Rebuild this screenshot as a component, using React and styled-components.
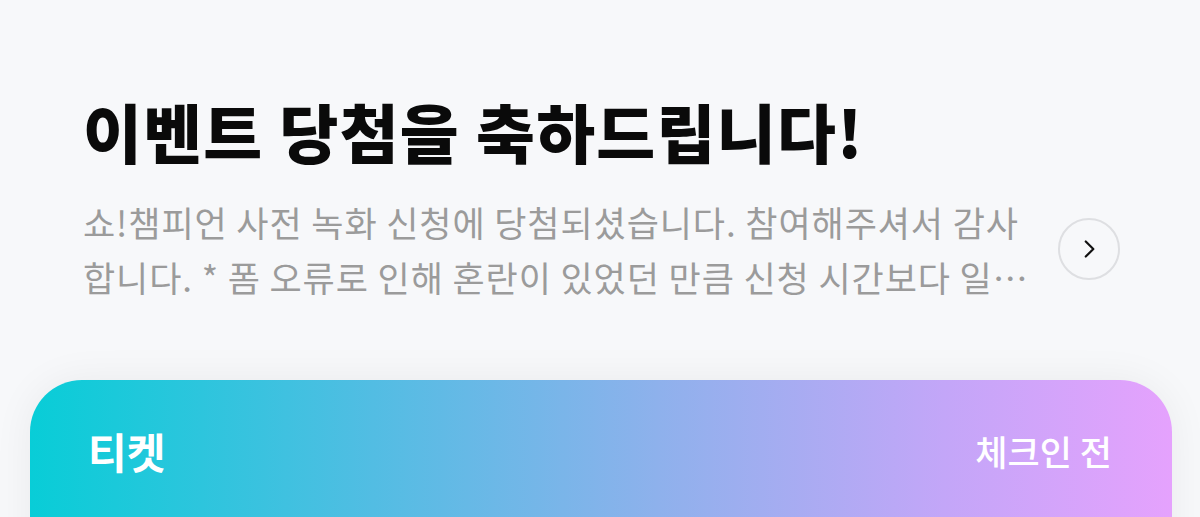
import React from 'react'
import styled, { createGlobalStyle } from 'styled-components'

const GlobalStyle = createGlobalStyle`
  html, body {
    margin: 0;
    padding: 0;
    background: #f7f8fa;
    font-family: "Noto Sans CJK KR", "Noto Sans", sans-serif;
  }
  body {
    overflow: hidden;
  }
`

const Page = styled.div`
  width: 1200px;
  height: 517px;
  overflow: hidden;
  background: #f7f8fa;
`

const Header = styled.section`
  padding: 84px 80px 0 83px;
`

const Title = styled.h1`
  margin: 0;
  font-size: 64px;
  font-weight: 800;
  letter-spacing: 1.3px;
  line-height: 92px;
  color: #0a0a0a;
`

const DescRow = styled.div`
  display: flex;
  align-items: center;
  gap: 24px;
  margin-top: 18px;
`

const Desc = styled.p`
  margin: 0;
  flex: 1;
  font-size: 35px;
  line-height: 55px;
  letter-spacing: 0.9px;
  color: #9b9b9b;
  display: -webkit-box;
  -webkit-line-clamp: 2;
  -webkit-box-orient: vertical;
  overflow: hidden;
`

const MoreButton = styled.button`
  flex: none;
  width: 62px;
  height: 62px;
  border-radius: 50%;
  border: 2px solid #dedfe2;
  background: #f7f8fa;
  display: flex;
  align-items: center;
  justify-content: center;
  padding: 0;
  cursor: pointer;
  svg {
    width: 26px;
    height: 26px;
  }
`

const Card = styled.div`
  margin: 76px 28px 0 30px;
  height: 300px;
  border-radius: 52px 52px 0 0;
  background: linear-gradient(90deg, #08cdd7 0%, #52bde3 30%, #8eb1ec 55%, #c3a6f8 80%, #e5a2fd 100%);
  box-shadow: 0 0 40px rgba(0, 0, 0, 0.06);
`

const CardHead = styled.div`
  display: flex;
  align-items: center;
  justify-content: space-between;
  padding: 40px 60px 0 58px;
  color: #fff;
`

const CardTitle = styled.span`
  font-size: 42px;
  font-weight: 700;
`

const Status = styled.span`
  font-size: 35px;
  font-weight: 500;
`

export default function App() {
  return (
    <Page>
      <GlobalStyle />
      <Header>
        <Title>이벤트 당첨을 축하드립니다!</Title>
        <DescRow>
          <Desc>
            쇼!챔피언 사전 녹화 신청에 당첨되셨습니다. 참여해주셔서 감사합니다. * 폼 오류로 인해 혼란이 있었던 만큼 신청 시간보다 일찍 오신 분들을 우선으로 입장 도와드리겠습니다.
          </Desc>
          <MoreButton aria-label="자세히 보기">
            <svg viewBox="0 0 24 24" fill="none" stroke="#111" strokeWidth="2" strokeLinecap="round" strokeLinejoin="round">
              <path d="M9 5l7 7-7 7" />
            </svg>
          </MoreButton>
        </DescRow>
      </Header>
      <Card>
        <CardHead>
          <CardTitle>티켓</CardTitle>
          <Status>체크인 전</Status>
        </CardHead>
      </Card>
    </Page>
  )
}
